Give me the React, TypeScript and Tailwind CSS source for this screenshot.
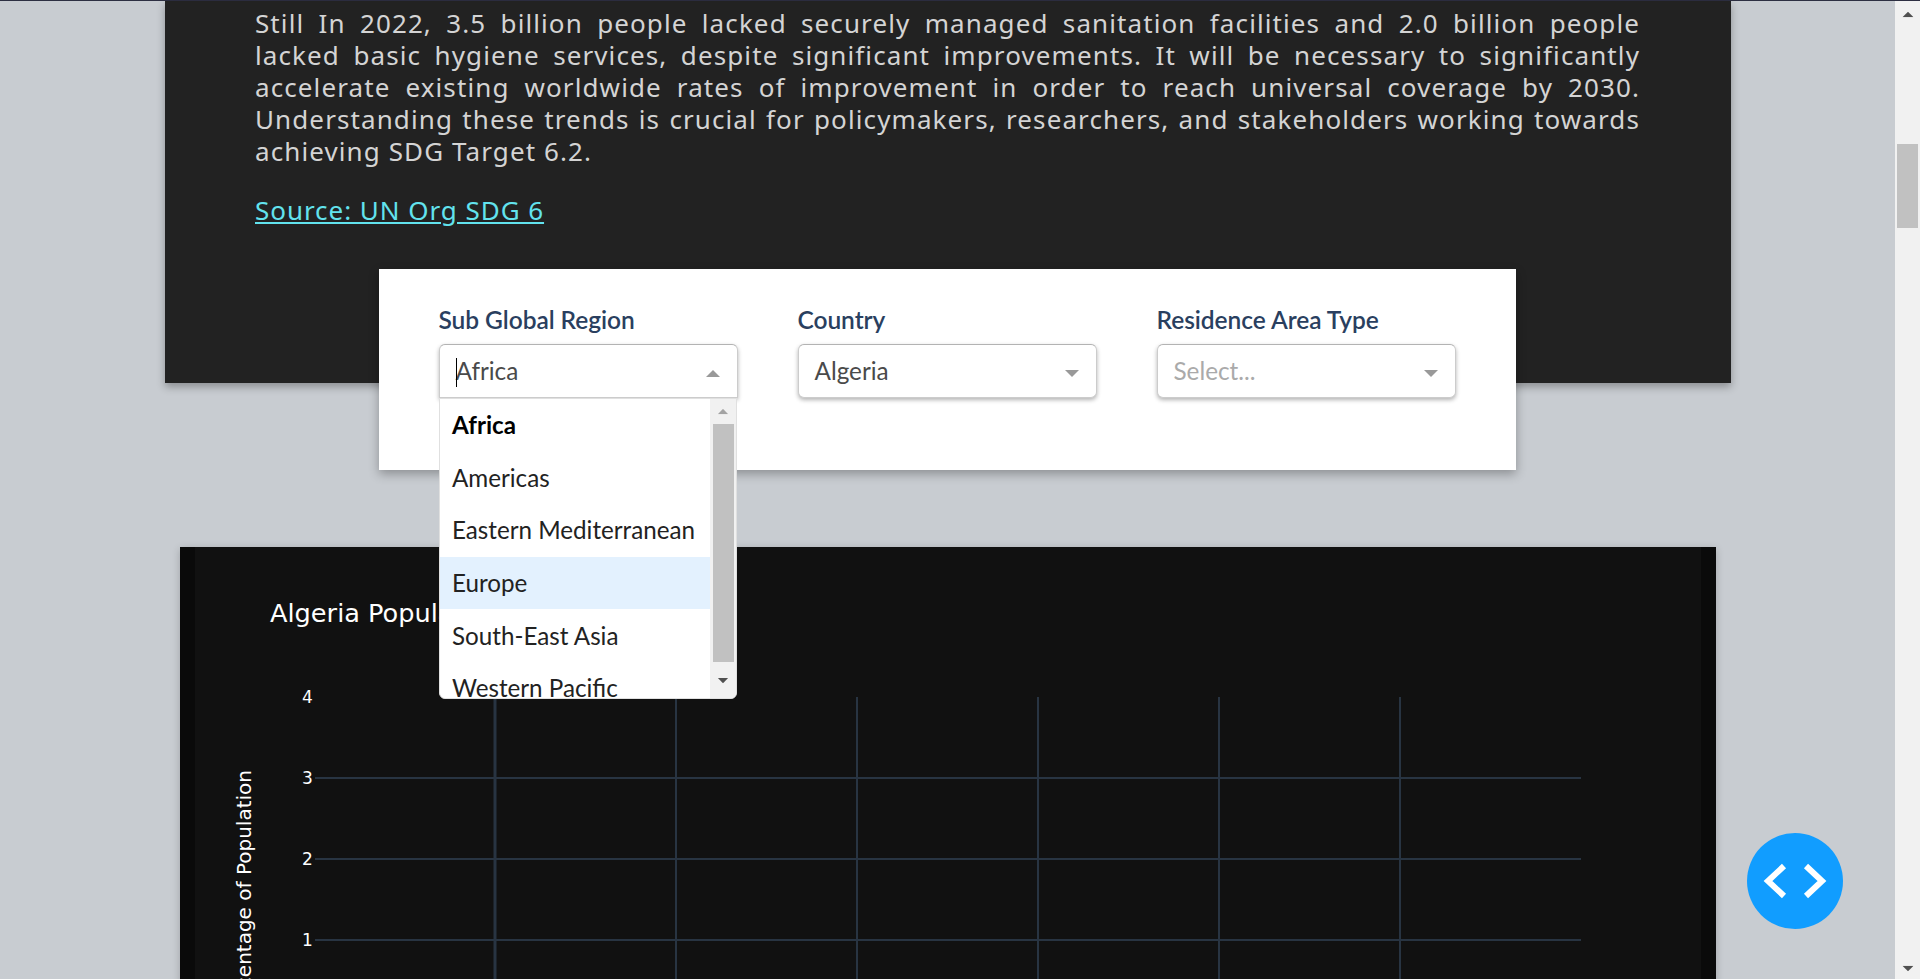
import React from 'react';

const OPTIONS = ['Africa', 'Americas', 'Eastern Mediterranean', 'Europe', 'South-East Asia', 'Western Pacific'];

const Caret = ({up, className}: {up?: boolean; className: string}) => (
  <svg width="14" height="7" viewBox="0 0 14 7" className={className}>
    <path d={up ? 'M0 7 L7 0 L14 7 Z' : 'M0 0 L14 0 L7 7 Z'} fill="currentColor" />
  </svg>
);

const Dropdown: React.FC<{label: string; value?: string; open?: boolean}> = ({label, value, open}) => (
  <div className="relative w-[299px]">
    <div className="text-[24.5px] leading-[30px] text-[#2a3f5f] font-semibold tracking-[-0.05px] mb-[9px]">{label}</div>
    <div className={`relative h-[54px] bg-white border border-[#ccc] border-t-[#b3b3b3] shadow-[0_2px_4px_rgba(0,0,0,0.3)] flex items-center pl-[16px] pr-[16px] text-[24.3px] ${open ? 'rounded-t-[6px]' : 'rounded-[6px]'}`}>
      {open && <span className="absolute left-[16px] top-[13px] h-[29px] w-[1.5px] bg-black" />}
      <span className={value ? 'text-[#4a4a4a]' : 'text-[#aaa]'}>{value ?? 'Select...'}</span>
      <Caret up={open} className="ml-auto mr-[1px] mt-[4px] text-[#999]" />
    </div>
    {open && (
      <div className="absolute z-20 left-0 top-[93px] w-[298.5px] h-[301px] bg-white border border-[#e0e0e0] rounded-b-[6px] overflow-hidden flex">
        <div className="flex-1 overflow-hidden">
          {OPTIONS.map((o, i) => (
            <div key={o} className={`h-[52.6px] pl-[12.5px] flex items-center text-[24.2px] text-[#222] ${i === 0 ? 'font-bold text-black' : ''} ${i === 3 ? 'bg-[#e3f1fe]' : ''}`}>{o}</div>
          ))}
        </div>
        <div className="w-[26px] bg-[#f1f1f1] flex flex-col items-center">
          <div className="h-[25px] flex items-center"><Caret up className="scale-75 text-[#a3a3a3]" /></div>
          <div className="w-[21px] h-[238px] bg-[#c1c1c1]" />
          <div className="flex-1 flex items-center"><Caret className="scale-75 text-[#505050]" /></div>
        </div>
      </div>
    )}
  </div>
);

const Chart = () => (
  <div className="relative h-[700px] mx-[180px] mr-[179px] bg-[#111111] border-x-[15px] border-[#0a0a0a] shadow-[0_2px_8px_rgba(0,0,0,0.2)] [font-family:'DejaVu_Sans',sans-serif] text-white">
    <div className="pt-[50px] pl-[75px] text-[25.6px] leading-[32px]">Algeria Population</div>
    <svg width="1506" height="432" className="absolute left-0 top-[0px]" fill="none">
      {[231, 312, 393].map((y) => <line key={y} x1="120" x2="1386" y1={y} y2={y} stroke="#283442" strokeWidth="2" />)}
      <line x1="300" x2="300" y1="150" y2="432" stroke="#283442" strokeWidth="3" />
      {[481, 662, 843, 1024, 1205].map((x) => <line key={x} x1={x} x2={x} y1="150" y2="432" stroke="#283442" strokeWidth="2" />)}
    </svg>
    {[['4', 150], ['3', 231], ['2', 312], ['1', 393]].map(([t, y]) => (
      <span key={t} className="absolute left-[107px] text-[17px] leading-[20px] -translate-y-1/2" style={{top: y as number}}>{t}</span>
    ))}
    <span className="absolute left-[37px] top-[223px] text-[20px] leading-[24px] whitespace-nowrap [writing-mode:vertical-rl] rotate-180">Percentage of Population</span>
  </div>
);

export default function App() {
  return (
    <div className="relative flex h-[979px] overflow-hidden bg-[#c8ccd1] [font-family:Lato,sans-serif]">
      <main className="flex-1 h-full overflow-hidden">
        <div className="h-[1px] bg-[#2d2f42]" />
        <section className="mx-[165px] mr-[164px] h-[382px] bg-[#222222] shadow-[0_4px_8px_rgba(0,0,0,0.3)] pl-[90px] pr-[91px] pt-[6px] [font-family:'Noto_Sans',sans-serif] text-[26px] leading-[32px] tracking-[1.1px] text-[#d4d4d4]">
          <p className="text-justify">
            Still In 2022, 3.5 billion people lacked securely managed sanitation facilities and 2.0 billion people lacked basic hygiene services, despite significant improvements. It will be necessary to significantly accelerate existing worldwide rates of improvement in order to reach universal coverage by 2030. Understanding these trends is crucial for policymakers, researchers, and stakeholders working towards achieving SDG Target 6.2.
          </p>
          <a className="block mt-[27px] text-[#62e3ee] underline tracking-[0.95px]">Source: UN Org SDG 6</a>
        </section>
        <section className="relative z-10 -mt-[114px] ml-[379px] w-[1137px] h-[201px] bg-white shadow-[0_4px_10px_rgba(0,0,0,0.3)] pl-[59.5px] pt-[36px] flex gap-[60px]">
          <Dropdown label="Sub Global Region" value="Africa" open />
          <Dropdown label="Country" value="Algeria" />
          <Dropdown label="Residence Area Type" />
        </section>
        <div className="mt-[77px]"><Chart /></div>
      </main>
      <aside className="w-[25px] h-full bg-[#f1f1f1] flex flex-col items-center">
        <div className="h-[1px] w-full bg-[#2d2f42]" />
        <Caret up className="mt-[10px] text-[#505050] scale-[0.8]" />
        <div className="mt-[126px] w-[21px] h-[84px] bg-[#c1c1c1]" />
        <Caret className="mt-auto mb-[7px] text-[#505050] scale-[0.8]" />
      </aside>
      <button className="absolute z-30 left-[1747px] top-[833px] w-[96px] h-[96px] rounded-full bg-[#119dff] flex items-center justify-center">
        <svg width="96" height="96" viewBox="0 0 96 96" fill="none" stroke="white" strokeWidth="6">
          <path d="M37 33 L21 48 L37 63" />
          <path d="M59 33 L75 48 L59 63" />
        </svg>
      </button>
    </div>
  );
}
